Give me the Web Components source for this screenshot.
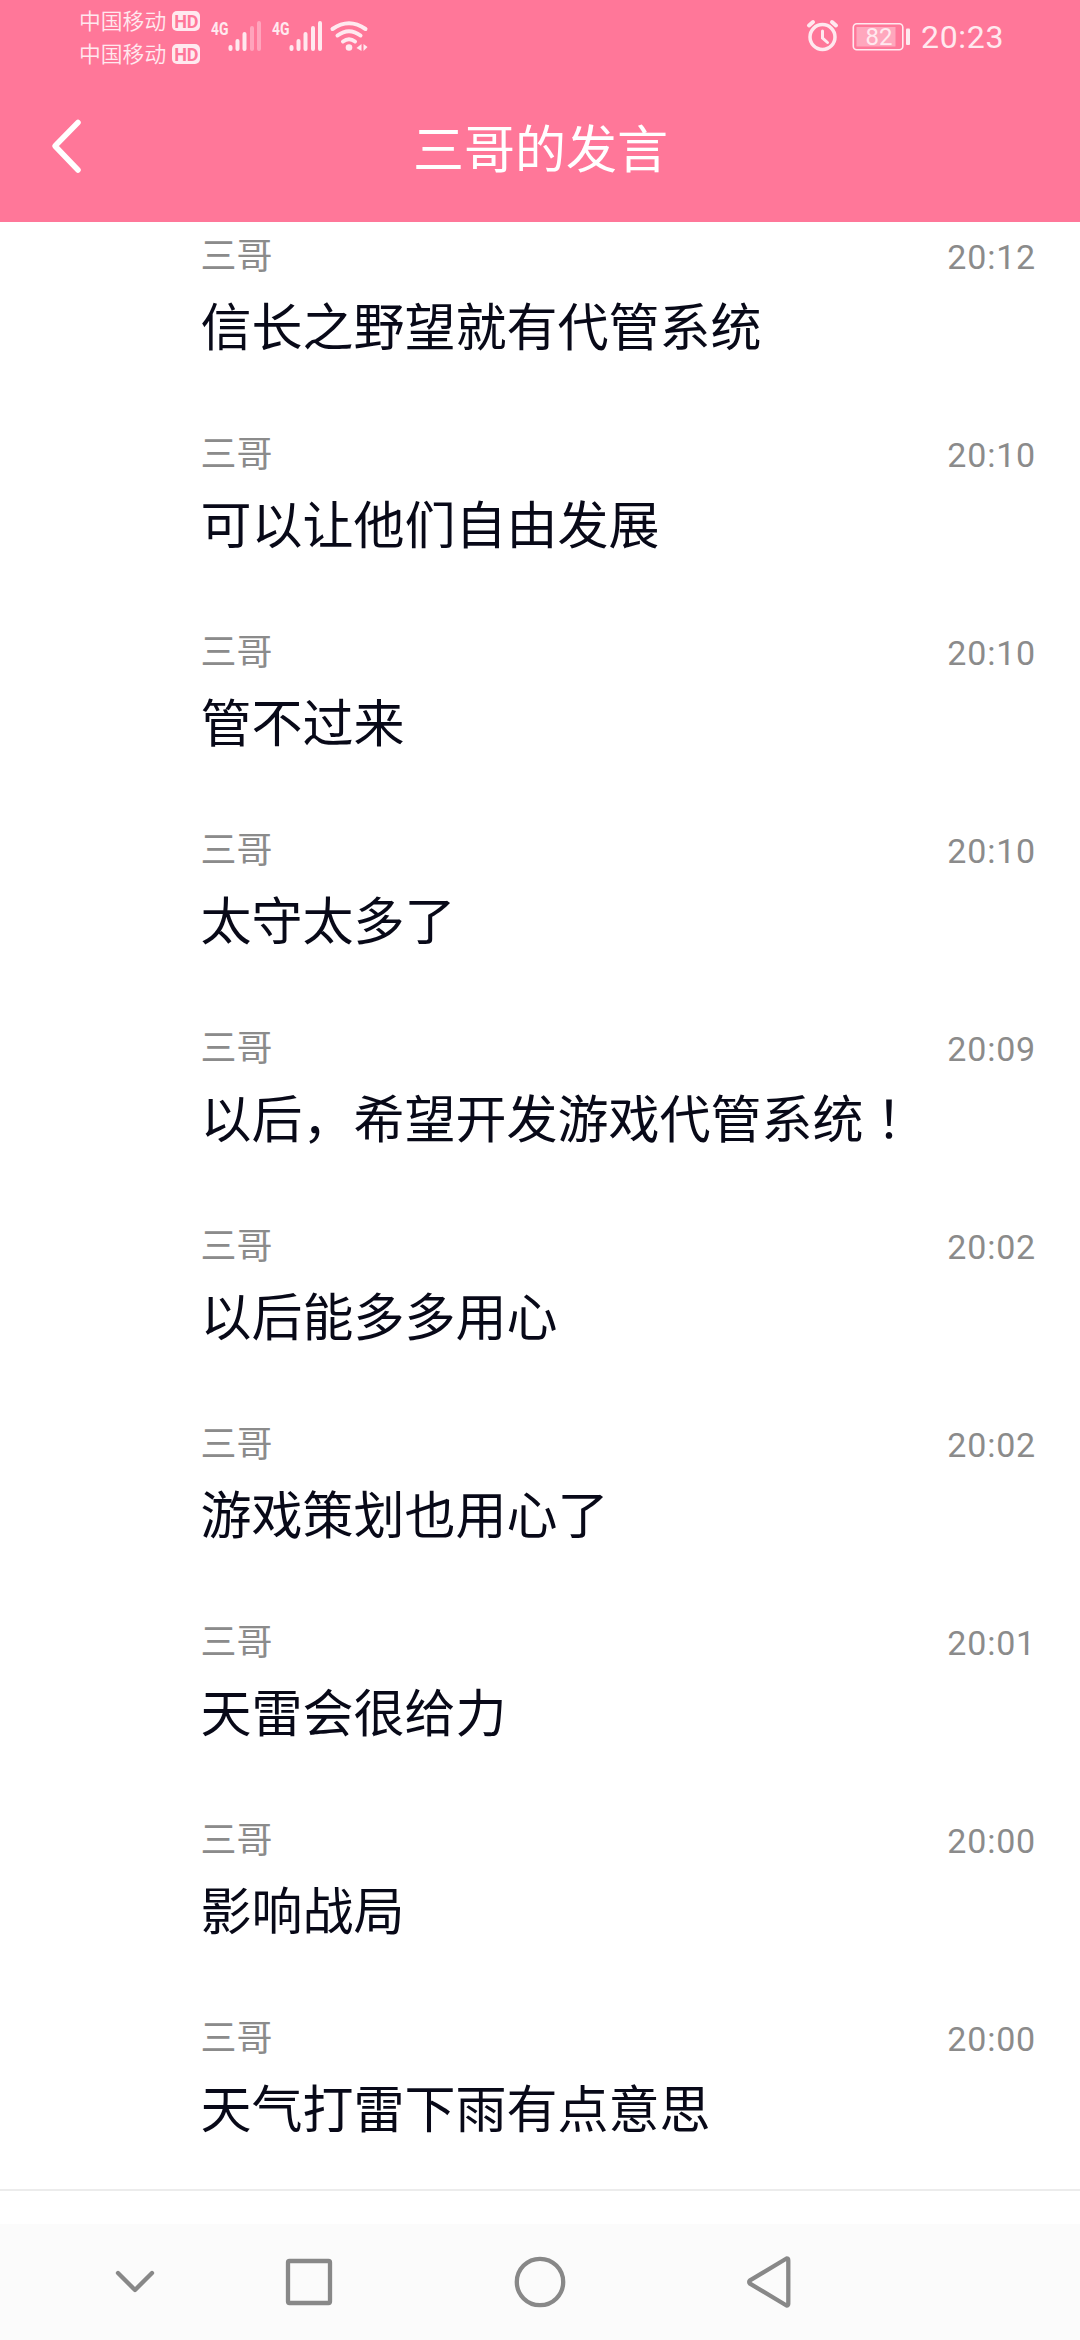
<!DOCTYPE html>
<html lang="zh-CN">
<head>
<meta charset="utf-8">
<title>三哥的发言</title>
<style>
html,body{margin:0;padding:0}
body{width:1080px;height:2340px;overflow:hidden;background:#fff;font-family:"Noto Sans CJK SC",sans-serif}
</style>
</head>
<body>
<chat-app></chat-app>
<script>
const define=(name,html)=>{
  const t=document.createElement('template');t.innerHTML=html;
  customElements.define(name,class extends HTMLElement{
    constructor(){super();this.attachShadow({mode:'open'}).append(t.content.cloneNode(true));}
  });
};
define('carrier-label',`<style>
:host{display:flex;align-items:center;gap:6px;height:33px;font-size:21.8px;line-height:33px;color:#ffe9ef;font-weight:350}
span{height:36px}
b{font:700 18px/21px Roboto,sans-serif;width:28px;height:20px;border-radius:5px;background:#ffe9ef;color:#ff7799;text-align:center;letter-spacing:-.2px}
</style><span><slot></slot></span><b>HD</b>`);
define('status-bar',`<style>
:host{display:flex;height:74px;padding:4px 77px 0 79px;box-sizing:border-box;color:#ffe9ef}
.c{display:flex;flex-direction:column}
svg{display:block;flex:none}
.r{margin-left:auto;display:flex;height:66px;align-items:center}
time{font:400 32px/67px Roboto,sans-serif;margin-left:11px;letter-spacing:.7px;width:82px;height:66px;white-space:nowrap}
text{font-family:Roboto,sans-serif}
</style>
<div class="c"><carrier-label>中国移动</carrier-label><carrier-label>中国移动</carrier-label></div>
<svg width="170" height="60" viewBox="199.500 4 170 60" fill="#ffe9ef">
<g font-size="19" font-weight="700"><text x="210.500" y="34.500" textLength="17.500" lengthAdjust="spacingAndGlyphs">4G</text><text x="271.500" y="34.500" textLength="17.500" lengthAdjust="spacingAndGlyphs">4G</text></g>
<g stroke="#ffe9ef" stroke-width="4" stroke-linecap="round" fill="none">
<path d="M230 47v2M237 41v8M244 34v15"/><path opacity=".4" d="M251.500 28v21M258.500 23v26"/>
<path d="M291 47v2M298 41v8M305 34v15M312.500 28v21M319.500 23v26"/>
<path d="M332 29Q348.500 17.500 365 29M337 35.500Q348.500 27 360 35.500M342.500 41.500Q348.500 37 354.500 41.500"/></g>
<circle cx="348.500" cy="47.500" r="3.300"/><path d="M361 44v7l-5-3zM363 44l4 3-4 4z"/>
</svg>
<div class="r">
<svg width="105" height="66" viewBox="804.500 4 105 66">
<g fill="none" stroke="#ffe9ef" stroke-linecap="round"><circle cx="822" cy="37" r="12.500" stroke-width="3.500"/><path d="M822 31v7l5 4.500" stroke-width="3"/><path d="M808.500 25.500l4-3.500M835.500 25.500l-4-3.500" stroke-width="4"/></g>
<rect x="852.800" y="23.700" width="49.500" height="26" rx="3.500" fill="none" stroke="#ffe9ef" stroke-width="1.600"/>
<rect x="856" y="27" width="39" height="19.500" fill="#ffe9ef" opacity=".42"/>
<text x="878.500" y="45" fill="#ffe9ef" font-size="24" text-anchor="middle">82</text>
<rect x="905.500" y="28.500" width="4" height="16.500" rx="1" fill="#ffe9ef"/>
</svg>
<time>20:23</time></div>`);
define('title-bar',`<style>
:host{display:grid;grid-template-columns:120px 1fr 120px;height:148px;align-items:center;color:#fff}
h1{margin:0;font-size:51px;font-weight:400;line-height:145px;text-align:center;height:148px;padding-left:1px}
svg{display:block}
</style><svg width="120" height="148" viewBox="0 74 120 148"><path d="M78 122.500L55 146l23 24" fill="none" stroke="#fff" stroke-width="5.500" stroke-linecap="round" stroke-linejoin="round"/></svg><h1><slot></slot></h1>`);
define('chat-message',`<style>
:host{display:block;height:198px;padding:18px 44px 0 200.500px;box-sizing:border-box}
.m{display:flex;justify-content:space-between;height:52px;line-height:52px;color:#8b8b8b;font-size:36px;font-weight:400}
.t{font-family:Roboto,sans-serif;font-weight:400;font-size:34px;letter-spacing:.8px;color:#8b8b8b;padding-top:4px}
.b{font-size:51px;line-height:76px;margin-top:7px;color:#080918;white-space:nowrap;font-weight:400}
</style><div class="m"><slot name="name"></slot><span class="t"><slot name="time"></slot></span></div><div class="b"><slot></slot></div>`);
define('nav-bar',`<style>
:host{display:block;height:116px;background:#fbfbfb}svg{display:block}
</style><svg width="1080" height="116" viewBox="0 2224 1080 116" fill="none" stroke="#888" stroke-width="4.300" stroke-linecap="round" stroke-linejoin="round">
<path d="M118 2273l17 17 17-17"/><rect x="288" y="2261" width="42" height="42" rx="1.500"/><circle cx="540" cy="2282" r="23.200"/><path d="M786.500 2258.500Q788.300 2258.500 788.300 2260.500V2303.500Q788.300 2305.500 786.500 2305.500L750 2283.700Q748.300 2282 750 2280.300Z"/></svg>`);
const messages=[['20:12','信长之野望就有代管系统'],['20:10','可以让他们自由发展'],['20:10','管不过来'],['20:10','太守太多了'],['20:09','以后，希望开发游戏代管系统<span class="centered" lang="zh-TW">！</span>'],['20:02','以后能多多用心'],['20:02','游戏策划也用心了'],['20:01','天雷会很给力'],['20:00','影响战局'],['20:00','天气打雷下雨有点意思']];
define('chat-app',`<style>
:host{display:flex;flex-direction:column;width:1080px;height:2340px;background:#fff}
header{background:#ff7799;height:222px;flex:none}
main{height:1967px;display:flex;flex-direction:column;justify-content:flex-end;overflow:hidden;flex:none}
chat-message{flex:none}
.centered{font-family:"Noto Sans CJK TC",sans-serif}
footer{height:33px;border-top:2px solid #ececec;flex:none}
</style><header><status-bar></status-bar><title-bar>三哥的发言</title-bar></header>
<main>${messages.map(m=>`<chat-message><span slot="name">三哥</span><span slot="time">${m[0]}</span>${m[1]}</chat-message>`).join('')}</main><footer></footer><nav-bar></nav-bar>`);
</script>
</body>
</html>
